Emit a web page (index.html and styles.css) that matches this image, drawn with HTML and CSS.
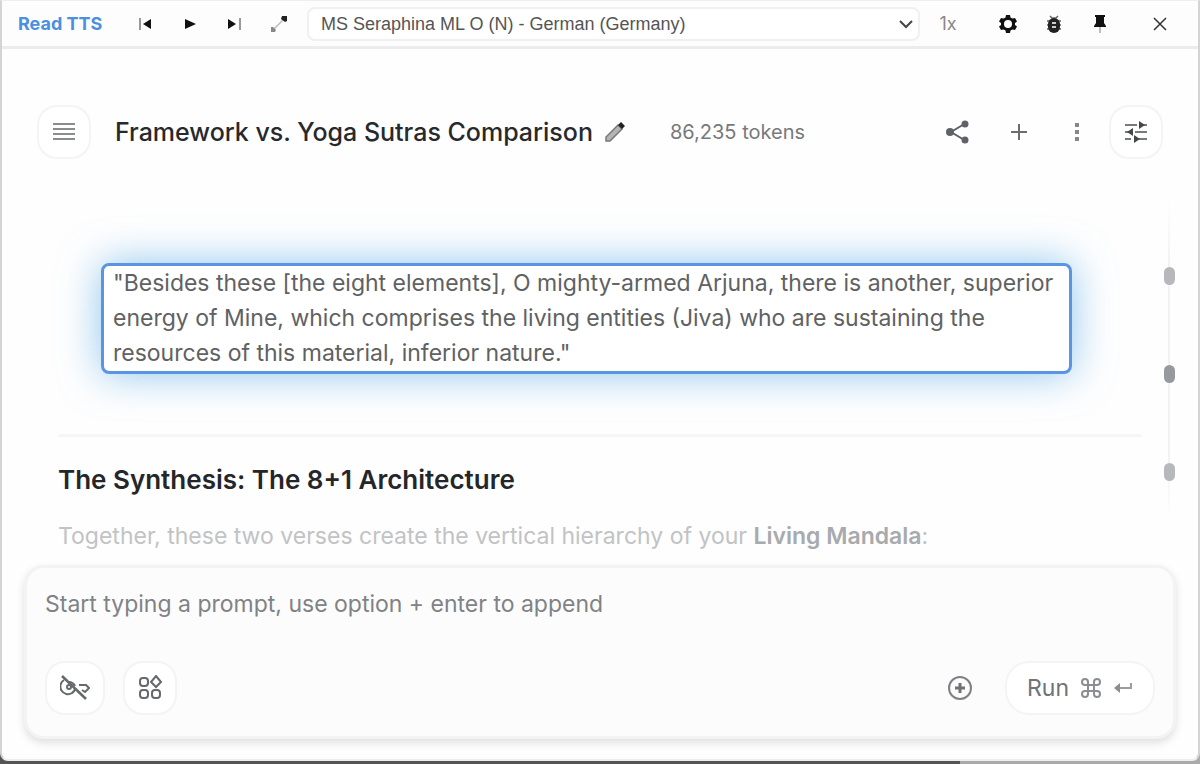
FILE: index.html
```html
<!DOCTYPE html>
<html lang="en">
<head>
    <meta charset="UTF-8">
    <title>Framework vs. Yoga Sutras Comparison</title>
    <link rel="stylesheet" href="styles.css">
</head>
<body>
<div class="window">
    <div class="reader">
        <a class="brand" href="#">Read TTS</a>
        <div class="playback">
            <button aria-label="Previous"><svg width="18" height="18" viewBox="0 0 18 18"><path d="M3 3v12" stroke="#999" stroke-width="2"/><path d="M14 4v10L6 9z" fill="#111"/></svg></button>
            <button aria-label="Play"><svg width="18" height="18" viewBox="0 0 18 18"><path d="M4 4l11 5-11 5z" fill="#111"/></svg></button>
            <button aria-label="Next"><svg width="18" height="18" viewBox="0 0 18 18"><path d="M15 3v12" stroke="#999" stroke-width="2"/><path d="M3 4v10l8-5z" fill="#111"/></svg></button>
            <button aria-label="Expand"><svg width="20" height="20" viewBox="0 0 20 20"><path d="M5 15L15 5" stroke="#bbb" stroke-width="1.500"/><path d="M13 2h5v5l-2 1-4-3z" fill="#222"/><path d="M2 13v5h4l1-2-3-3z" fill="#888"/></svg></button>
        </div>
        <select class="voice" aria-label="Voice">
            <option>MS Seraphina ML O (N) - German (Germany)</option>
        </select>
        <button class="speed">1x</button>
        <div class="tools">
            <button aria-label="Settings"><svg width="20" height="20" viewBox="0 0 20 20"><path d="M8 1h4l.5 2.500 2 1L17 4l2 3.500-2 1.500v2l2 1.500-2 3.500-2.500-.5-2 1L12 19H8l-.5-2.500-2-1L3 16l-2-3.500L3 11V9L1 7.500 3 4l2.500.5 2-1z" fill="#111"/><circle cx="10" cy="10" r="4" fill="#fff"/></svg></button>
            <button aria-label="Report a bug"><svg width="20" height="20" viewBox="0 0 20 20"><path d="M6 2l2 2h4l2-2M3 7h14M3 11h14M3 15h14" fill="none" stroke="#666" stroke-width="1.500"/><rect x="4" y="4" width="12" height="15" rx="6" fill="#222"/><path d="M8 9h4M8 13h4" stroke="#ccc" stroke-width="2"/></svg></button>
            <button aria-label="Pin"><svg width="20" height="20" viewBox="0 0 20 20"><path d="M5 1h10v2h-1v6l2 3v1H4v-1l2-3V3H5z" fill="#111"/><path d="M10 13v6" stroke="#bbb" stroke-width="2"/></svg></button>
            <button class="close" aria-label="Close"><svg width="20" height="20" viewBox="0 0 20 20"><path d="M4 4l12 12M16 4L4 16" stroke="#333" stroke-width="1.500"/></svg></button>
        </div>
    </div>

    <header class="header">
        <button class="pill" aria-label="Menu"><svg width="24" height="24" viewBox="0 0 24 24"><path d="M1 4h22M1 9h22M1 14h22M1 19h22" stroke="#8a8c8f" stroke-width="2"/></svg></button>
        <h1>Framework vs. Yoga Sutras Comparison</h1>
        <button class="edit" aria-label="Edit title"><svg width="24" height="24" viewBox="0 0 24 24"><path d="M3 21v-4L15 5l4 4L7 21z" fill="#b4b4b4" stroke="#777" stroke-width="1.500"/><path d="M15 5l3-3 4 4-3 3z" fill="#222"/></svg></button>
        <span class="tokens">86,235 tokens</span>
        <div class="actions">
            <button aria-label="Share"><svg width="26" height="26" viewBox="0 0 26 26"><path d="M21 4L6 13l15 9" fill="none" stroke="#5f6266" stroke-width="2"/><circle cx="5" cy="13" r="4" fill="#5f6266"/><circle cx="20" cy="5" r="3.500" fill="#5f6266"/><circle cx="20" cy="21" r="3.500" fill="#5f6266"/></svg></button>
            <button aria-label="New chat"><svg width="20" height="20" viewBox="0 0 20 20"><path d="M10 2v16M2 10h16" stroke="#6a6d70" stroke-width="2"/></svg></button>
            <button aria-label="More"><svg width="20" height="20" viewBox="0 0 20 20"><path d="M8 1h4v4H8zM8 8h4v4H8zM8 15h4v4H8z" fill="#85888b"/></svg></button>
            <button class="pill" aria-label="Run settings"><svg width="24" height="24" viewBox="0 0 24 24"><path d="M1 5h12M19 5h4M1 12h4M11 12h12M1 19h6M15 19h8" stroke="#77797c" stroke-width="2"/><path d="M15 1l6 4-6 4zM9 8v8l-6-4zM10 15l6 4-6 4z" fill="#44474a"/></svg></button>
        </div>
    </header>

    <main class="chat">
        <article>
            <blockquote>"Besides these [the eight elements], O mighty-armed Arjuna, there is another, superior energy of Mine, which comprises the living entities (Jiva) who are sustaining the resources of this material, inferior nature."</blockquote>
            <hr>
            <h2>The Synthesis: The 8+1 Architecture</h2>
            <p>Together, these two verses create the vertical hierarchy of your <strong>Living Mandala</strong>:</p>
        </article>
        <nav class="turns">
            <a href="#" aria-label="Previous turn"></a>
            <a href="#" class="current" aria-label="Current turn"></a>
            <a href="#" aria-label="Next turn"></a>
        </nav>
    </main>

    <form class="prompt">
        <textarea rows="1" aria-label="Prompt" placeholder="Start typing a prompt, use option + enter to append"></textarea>
        <div class="prompt-bar">
            <button type="button" class="pill key" aria-label="No API key"><svg width="30" height="26" viewBox="0 0 30 26"><g fill="none" stroke="#66696c" stroke-width="2"><path d="M4 5a7 7 0 0 0 8 13c2-1 3-3 3-5M9 7c3 0 5 2 6 4M19 10h7l3 3-4 4-3-2"/><circle cx="9" cy="12" r="2"/><path d="M2 1l24 23" stroke-width="2.500"/></g></svg></button>
            <button type="button" class="pill" aria-label="Tools"><svg width="26" height="26" viewBox="0 0 26 26"><g fill="none" stroke="#66696c" stroke-width="2"><rect x="3" y="3" width="8" height="8" rx="3"/><rect x="3" y="15" width="8" height="8" rx="3"/><rect x="15" y="15" width="8" height="8" rx="3"/><path d="M19 1l5 6-5 5-5-5z"/></g></svg></button>
            <button type="button" class="add" aria-label="Insert"><svg width="26" height="26" viewBox="0 0 26 26"><circle cx="13" cy="13" r="11" fill="none" stroke="#7f8184" stroke-width="2"/><path d="M13 8v10M8 13h10" stroke="#6f7174" stroke-width="3"/></svg></button>
            <button type="button" class="pill run">Run
                <svg width="20" height="20" viewBox="0 0 20 20"><path d="M7 7V4a3 3 0 1 0-3 3h12a3 3 0 1 0-3-3v12a3 3 0 1 0 3-3H4a3 3 0 1 0 3 3z" fill="none" stroke="#8a8d91" stroke-width="2"/></svg>
                <svg width="20" height="20" viewBox="0 0 20 20"><path d="M18 5v5H3" fill="none" stroke="#9a9da1" stroke-width="2"/><path d="M7 5v10l-6-5z" fill="#8a8d91"/></svg>
            </button>
        </div>
    </form>
</div>
</body>
</html>
```
FILE: styles.css
```css
* {
    box-sizing: border-box;
}
body {
    margin: 0;
    background: linear-gradient(90deg, #555 80%, #aaa 80%);
    font-family: Inter, "Liberation Sans", sans-serif;
    color: #5c5f62;
}
button {
    display: flex;
    align-items: center;
    justify-content: center;
    margin: 0;
    padding: 0;
    border: 0;
    background: none;
    font: inherit;
    color: inherit;
}
.window {
    display: flex;
    flex-direction: column;
    height: calc(100vh - 3px);
    border: 2px solid #d4d4d4;
    border-top: 1px solid #eee;
    border-bottom-color: #eee;
    border-radius: 0 0 8px 8px;
    background: #fefefe;
}

/* reader toolbar */
.reader {
    display: flex;
    align-items: center;
    height: 48px;
    padding: 0 28px 0 16px;
    border-bottom: 3px solid #ececec;
    background: #fdfdfd;
}
.brand {
    width: 119px;
    font-size: 18px;
    font-weight: 700;
    color: #4a8fe0;
    text-decoration: none;
}
.playback {
    display: flex;
    gap: 26px;
    margin-right: 18px;
}
.voice {
    flex: 1;
    height: 34px;
    padding: 0 12px;
    border: 2px solid #f0f0f0;
    border-radius: 8px;
    appearance: none;
    background: #fff url("data:image/svg+xml,%3Csvg xmlns='http://www.w3.org/2000/svg' width='16' height='10'%3E%3Cpath d='M2 2l6 6 6-6' fill='none' stroke='%23444' stroke-width='2'/%3E%3C/svg%3E") no-repeat right 4px center;
    font-family: "Liberation Sans", sans-serif;
    font-size: 18px;
    color: #555;
}
.speed {
    width: 56px;
    font-size: 18px;
    color: #888;
}
.tools {
    display: flex;
    gap: 26px;
    margin-left: 22px;
}
.close {
    margin-left: 14px;
}

/* chat header */
.header {
    display: flex;
    align-items: center;
    padding: 56px 35px 0;
}
.pill {
    width: 54px;
    height: 54px;
    border: 2px solid #f3f4f5;
    border-radius: 20px;
    background: #fff;
}
h1 {
    margin: 0 10px 0 24px;
    font-size: 25px;
    font-weight: 500;
    color: #27292c;
}
.tokens {
    margin-left: 43px;
    font-size: 20px;
    color: #77797c;
}
.actions {
    display: flex;
    align-items: center;
    gap: 38px;
    margin-left: auto;
}
.actions .pill {
    margin-left: -16px;
}

/* conversation */
.chat {
    display: flex;
    flex: 1;
    min-height: 0;
    padding: 40px 23px 40px 56px;
}
article {
    flex: 1;
    padding-top: 64px;
    font-size: 23px;
    line-height: 35px;
}
blockquote {
    margin: 0 70px 60px 43px;
    padding: 0 9px;
    border: 3px solid #5b95e2;
    border-radius: 8px;
    background: #fff;
    box-shadow: 0 0 40px rgba(66, 160, 230, .6);
    color: #606163;
}
hr {
    margin: 0;
    border: 0;
    border-top: 3px solid #f6f6f6;
}
h2 {
    margin: 25px 0 22px;
    font-size: 26px;
    font-weight: 600;
    color: #242629;
}
article p {
    margin: 0;
    color: #c1c3c5;
    white-space: nowrap;
}
article strong {
    font-weight: 600;
    color: #a8aaad;
}
.turns {
    display: flex;
    flex-direction: column;
    align-items: center;
    gap: 80px;
    width: 12px;
    height: 320px;
    margin-left: 21px;
    padding-top: 68px;
    background: linear-gradient(#fefefe, #f2f2f2 20%, #f2f2f2 80%, #fefefe) no-repeat center / 2px 100%;
}
.turns a {
    width: 11px;
    height: 18px;
    border-radius: 6px;
    background: #b6b8bb;
}
.turns .current {
    background: #96999d;
}

/* prompt box */
.prompt {
    margin: 0 22px 20px;
    padding: 21px 18px 21px;
    border: 3px solid #f3f3f3;
    border-radius: 20px;
    background: #fcfcfc;
    box-shadow: 0 4px 8px rgba(0, 0, 0, .12);
}
.prompt textarea {
    display: block;
    width: 100%;
    height: 72px;
    padding: 0;
    border: 0;
    outline: 0;
    resize: none;
    background: none;
    font: 23px/30px Inter, "Liberation Sans", sans-serif;
    color: #5c5f62;
}
.prompt textarea::placeholder {
    color: #808285;
}
.prompt-bar {
    display: flex;
    align-items: center;
    gap: 18px;
}
.key {
    width: 60px;
}
.add {
    margin-left: auto;
}
.run {
    gap: 12px;
    width: 150px;
    margin-left: 14px;
    border-radius: 24px;
    font-size: 23px;
    color: #707378;
}
```
